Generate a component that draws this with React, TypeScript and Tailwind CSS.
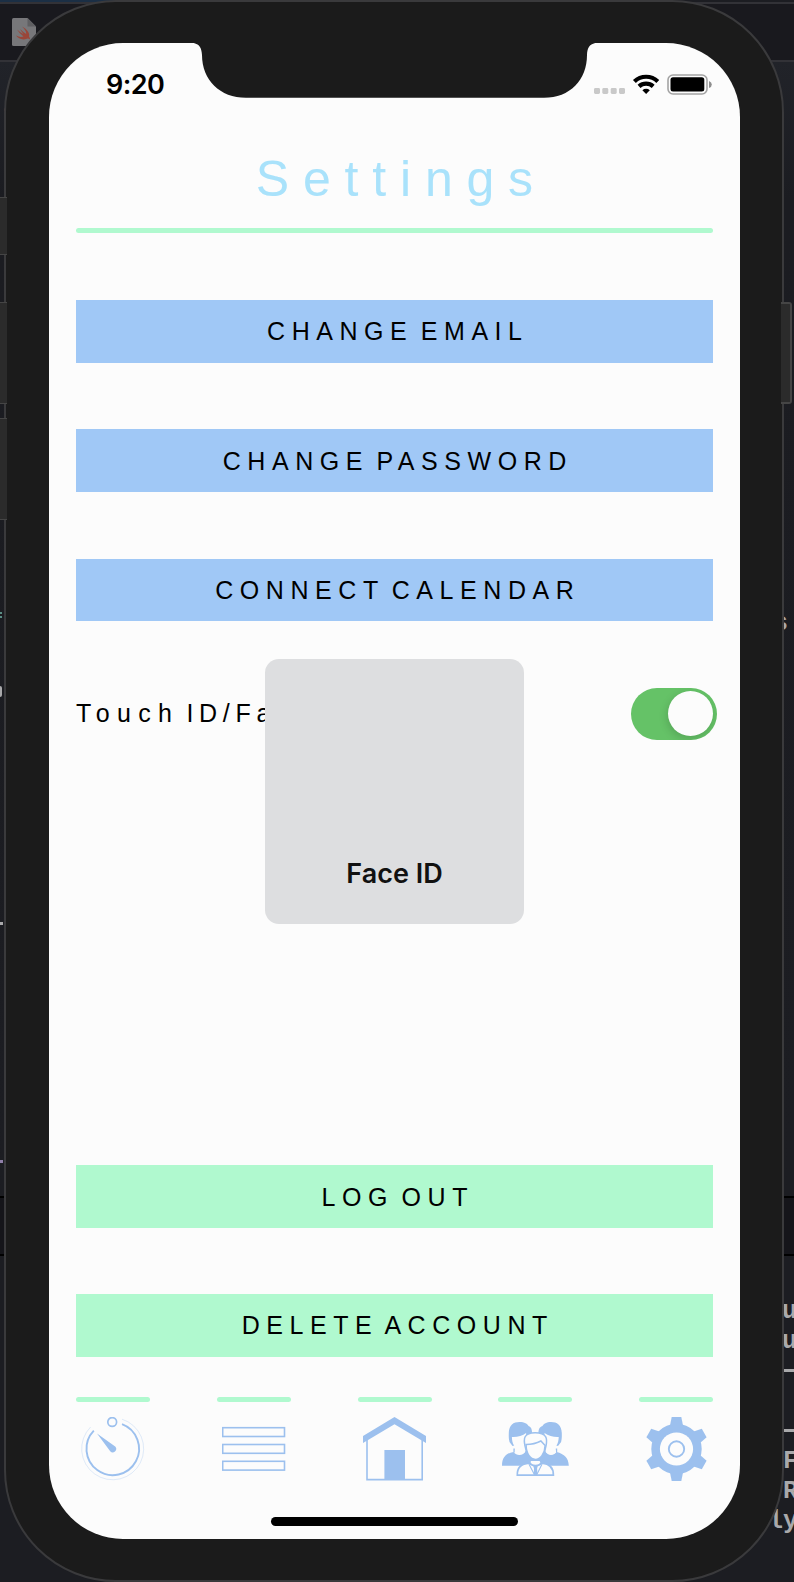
import React from "react";

const BLUE = "#9cc0ee";

function ActionButton({ label, tone }: { label: string; tone: "blue" | "green" }) {
  return (
    <button
      className={`flex h-[62.5px] w-full items-center justify-center pt-[0.6px] pl-[6.6px] text-[25px] leading-none tracking-[6.55px] [word-spacing:-6px] whitespace-pre text-black ${
        tone === "blue" ? "bg-[#a0c8f6]" : "bg-[#b0f9cf]"
      }`}
    >
      {label}
    </button>
  );
}

function TimerIcon() {
  return (
    <svg width="64" height="64" viewBox="0 0 64 64" fill="none" stroke={BLUE}>
      <circle cx="31.2" cy="5" r="4.4" strokeWidth="1.7" />
      <path d="M41 7.2A26.3 26.3 0 1 1 12.8 13.6" strokeWidth="1.9" />
      <path d="M41 2.2A31 31 0 1 1 9.6 10" strokeWidth="1" opacity="0.3" />
      <path d="M16 16.5L34.2 29.6A3.3 3.3 0 0 1 29.2 34.2Z" fill={BLUE} stroke="none" />
    </svg>
  );
}

function ListIcon() {
  return (
    <svg width="64" height="64" viewBox="0 0 64 64" fill="none" stroke={BLUE} strokeWidth="1.6">
      <rect x="0.7" y="10.7" width="61.8" height="8.8" />
      <rect x="0.7" y="27.5" width="61.8" height="8.8" />
      <rect x="0.7" y="44.3" width="61.8" height="8.8" />
    </svg>
  );
}

function HomeIcon() {
  return (
    <svg width="64" height="64" viewBox="0 0 64 64" fill={BLUE}>
      <path d="M31.5 0L63 19V26L31.5 7.2L0 26V19Z" />
      <path d="M4 22V62.6H59.2V22" fill="none" stroke={BLUE} strokeWidth="1.6" />
      <rect x="21.4" y="33" width="20.6" height="30" />
    </svg>
  );
}

function PeopleIcon() {
  return (
    <svg width="68" height="64" viewBox="-0.5 0 68 64" fill={BLUE}>
      <path d="M8 25C7 21 7.3 18 7.3 16C7.5 8 12 5 18 5C23 5 26 7 27 9C30 10 31 13 30.5 20L27 25L11 29Z" />
      <path d="M10.4 20C15 20.4 21 19 24.6 16V20C24.6 27 22.5 32.2 18.3 32.2C13 32.2 10.4 26 10.4 20Z" fill="#fcfcfc" />
      <path d="M59.6 25C60.6 21 60.3 18 60.3 16C60 8 55.5 5 49.6 5C45 5 42 7 41 9C37.5 10 36.5 13 37 20L41 25L56.5 29Z" />
      <path d="M57.2 20C53 20.4 47 19 43 16V20C43 27 45 32.2 49.3 32.2C54.5 32.2 57.2 26 57.2 20Z" fill="#fcfcfc" />
      <path d="M.5 48.7C.5 40 5 36 12 35C15 39 22 39 24 34L34 41L44 34C46 39 52 39 55 35C63 37 67 41 67.3 48.7Z" />
      <path d="M12.6 35.5V31.5M55 35.5V31.5" stroke={BLUE} strokeWidth="1.4" />
      <path d="M13.4 33C15.5 34.8 21 34.8 23.6 32.6V35C21 37.8 15.5 37.8 13.4 35.4Z" fill="#fcfcfc" />
      <path d="M44.2 32.6C47 34.8 52 34.8 54.4 33V35.4C52 37.8 47 37.8 44.2 35Z" fill="#fcfcfc" />
      <path d="M23.5 29C22 22 22 15.7 33.7 15.7C45.5 15.7 46 22 44.5 29C43.5 37 39 42.6 34 42.6C29 42.6 24.5 37 23.5 29Z" fill="#fcfcfc" stroke={BLUE} strokeWidth="1.5" />
      <path d="M24.6 27.5C30 27.5 35 26.3 39.4 24L43.6 28.5C43.4 37 38.5 42.4 34 42.4C29 42.4 24.6 37 24.6 27.5Z" fill="#fcfcfc" stroke={BLUE} strokeWidth="1.5" />
      <path d="M15.8 58.2C15.5 51 19 47 27.5 46.2L29 43.2H38.6L40.5 46.2C49 47 52 51 51.9 58.2Z" fill="#fcfcfc" stroke={BLUE} strokeWidth="1.7" />
      <path d="M28 45.4C29.5 49.6 38.5 49.6 40 45.4" fill="none" stroke={BLUE} strokeWidth="1.8" />
      <path d="M31.6 48.6H36.4L35.6 51.5L36 58H32.2L32.5 51.5Z" />
      <path d="M27.4 47L32.6 57M40.6 47L35.6 57" stroke={BLUE} strokeWidth="1.1" />
    </svg>
  );
}

function GearIcon() {
  const teeth = [0, 60, 120, 180, 240, 300];
  return (
    <svg width="64" height="64" viewBox="0 0 64 64" fill={BLUE}>
      <circle cx="32.5" cy="32" r="25.2" />
      {teeth.map((a) => (
        <path key={a} d="M27.7 0H37.3L39.3 10H25.7Z" transform={`rotate(${a} 32.5 32)`} />
      ))}
      <circle cx="32.5" cy="32" r="16.6" fill="#fcfcfc" />
      <circle cx="32.5" cy="32" r="7.7" fill="none" stroke={BLUE} strokeWidth="1.9" />
    </svg>
  );
}

function StatusIcons() {
  return (
    <svg width="120" height="24" viewBox="593 72 120 24">
      {[594, 602.3, 610.7, 619].map((x) => (
        <rect key={x} x={x} y="88" width="6" height="6" rx="1.4" fill="#c9c9c9" />
      ))}
      <g fill="none" stroke="#000" strokeWidth="4.2">
        <path d="M634.4 81.4A17 17 0 0 1 657.8 81.4" />
        <path d="M639 86.4A10.5 10.5 0 0 1 653.2 86.4" />
      </g>
      <path d="M642.4 90.2A5.4 5.4 0 0 1 649.8 90.2L646.1 94Z" />
      <rect x="668" y="75" width="39" height="19" rx="5" fill="none" stroke="#a3a3a3" strokeWidth="1.6" />
      <rect x="670.5" y="77.2" width="33.8" height="14.4" rx="2.5" />
      <path d="M709 81Q711.8 82 711.8 84.5Q711.8 87 709 88Z" fill="#8e8e8e" />
    </svg>
  );
}

function Notch() {
  return (
    <svg className="absolute top-0 left-[137px]" width="418" height="56" viewBox="186 43 418 56" fill="#1b1b1b">
      <path d="M186 42.5H190C199 43 201.5 47 202 55C202 80 220 97.8 246 97.8H544C570 97.8 587 80 587 55C587.3 47 590 43 599 42.5Z" />
    </svg>
  );
}

function SwiftFile() {
  return (
    <svg width="24" height="28" viewBox="0 0 24 28">
      <path d="M1.5 0H15.5L24 8.5V28H1.5Q0 28 0 26.5V1.5Q0 0 1.5 0Z" fill="#77777a" />
      <path d="M15.5 0L24 8.5H15.5Z" fill="#5f5f62" />
      <path
        d="M10 8.5C16 12 18 15.5 17 18.5Q18.6 20.5 17.7 21.5Q16.5 20 14.8 20.7C10.5 22.5 6 20.5 4 17.5Q8 19.8 11.5 18.5Q7 15 5 11.5Q8.5 14.7 11.6 16.2Q9 13 8 11Q11 14 14.2 16Q14.5 12.5 10 8.5Z"
        fill="#9a4639"
      />
    </svg>
  );
}

/* Code editor window that sits behind the simulator. */
function Desktop() {
  return (
    <div className="absolute inset-0 flex flex-col bg-[#1c1d22] font-['Liberation_Mono',monospace] text-[25px] leading-[30px] font-bold text-[#a9a9ab]">
      <div className="h-[2px] w-[440px] shrink-0 bg-[#1b2f45]" />
      <div className="h-[60px] shrink-0 border-y-2 border-[#323237] bg-[#19191e] pt-[14px] pl-[12px]">
        <SwiftFile />
      </div>
      <div className="flex h-[1134px] shrink-0 justify-between bg-[linear-gradient(180deg,#212329,#1b1c21_12%,#1c1d22)]">
        <div className="flex flex-col items-start pt-[46px]">
          <div className="ml-[4px] h-[9px] w-[3px] rounded-full bg-[#8a4a42]" />
          <div className="mt-[431px] ml-[4px] h-[6px] w-[2px] border-y-2 border-[#808080]" />
          <div className="mt-[58px] h-[6px] w-[2px] border-y-2 border-[#5c8f86]" />
          <div className="mt-[68px] h-[11px] w-[2px] rounded-r-full bg-[#a9a9ab]" />
          <div className="mt-[225px] h-[3px] w-[3px] bg-[#a9a9ab]" />
          <div className="mt-[235px] h-[3px] w-[3px] bg-[#8f7fa8]" />
        </div>
        <div className="pt-[547px] pr-[6px]">s</div>
      </div>
      <div className="h-[60px] shrink-0 border-y-2 border-black bg-[#15151a]" />
      <div className="flex grow flex-col pt-[41px] pl-[768px]">
        <div className="pl-[14px]">u</div>
        <div className="pl-[14px]">u</div>
        <div className="flex h-[90px] flex-col justify-between pt-[12px] pb-[15px] pl-[16px]">
          <div className="h-[3px] w-[10px] bg-[#a9a9ab]" />
          <div className="h-[3px] w-[10px] bg-[#a9a9ab]" />
        </div>
        <div className="pl-[15px]">F</div>
        <div>FR</div>
        <div>ly</div>
      </div>
    </div>
  );
}

const tabs = [TimerIcon, ListIcon, HomeIcon, PeopleIcon, GearIcon];

export default function App() {
  return (
    <div className="relative flex h-[1582px] w-[794px] overflow-hidden font-['Liberation_Sans',Arial,sans-serif]">
      <Desktop />

      <div className="relative ml-[4px] flex h-[1582px] w-[780px] shrink-0 rounded-[112px] border-2 border-[#3a3a3c] bg-[#1b1b1b]">
        <div className="-ml-[7px] flex w-[50px] shrink-0 flex-col pt-[195px]">
          <div className="h-[58px] w-[8px] border-y border-[#454545] bg-[#2b2b2b]" />
          <div className="mt-[47px] h-[102px] w-[8px] border-y border-[#454545] bg-[#2b2b2b]" />
          <div className="mt-[14px] h-[102px] w-[8px] border-y border-[#454545] bg-[#2b2b2b]" />
        </div>

        <main className="relative mt-[41px] flex h-[1496px] w-[691px] shrink-0 flex-col overflow-hidden rounded-[74px] bg-[#fcfcfc] px-[27px] text-black">
          <Notch />

          <header className="flex h-[82px] shrink-0 items-center justify-between pl-[30px]">
            <div className="font-['Inter',sans-serif] text-[27px] leading-none font-semibold tracking-[-0.6px]">9:20</div>
            <StatusIcons />
          </header>

          <h1 className="flex h-[103px] shrink-0 items-center justify-center pt-[4px] pl-[13.8px] text-[50px] leading-none tracking-[13.8px] text-[#a9e2fb]">
            Settings
          </h1>
          <div className="h-[5px] shrink-0 rounded-full bg-[#b0f9cf]" />

          <section className="mt-[67.2px] flex shrink-0 flex-col gap-[66.8px]">
            <ActionButton label="CHANGE EMAIL" tone="blue" />
            <ActionButton label="CHANGE PASSWORD" tone="blue" />
            <ActionButton label="CONNECT CALENDAR" tone="blue" />
          </section>

          <div className="mt-[66.7px] -mr-[4px] flex h-[52px] shrink-0 items-center justify-between">
            <p className="text-[25px] leading-none [word-spacing:-7px] whitespace-pre">
              <span className="tracking-[7.3px]">Touch </span>
              <span className="tracking-[5.7px]">ID/Face ID</span>
            </p>
            <div className="flex h-[52px] w-[86px] items-center justify-end overflow-hidden rounded-full bg-[#65c267] pr-[4px]">
              <div className="size-[45px] rounded-full bg-[#fcfcfc] shadow-[-1px_3px_8px_rgba(0,0,0,0.15)]" />
            </div>
          </div>

          <section className="mt-[425.5px] flex shrink-0 flex-col gap-[66.4px]">
            <ActionButton label="LOG OUT" tone="green" />
            <ActionButton label="DELETE ACCOUNT" tone="green" />
          </section>

          <nav className="mt-[40.2px] flex shrink-0 justify-between">
            {tabs.map((Icon, i) => (
              <div key={i} className="flex w-[74px] flex-col items-center gap-[15px]">
                <div className="h-[5px] w-full rounded-full bg-[#b0f9cf]" />
                <Icon />
              </div>
            ))}
          </nav>

          <div className="mt-[36px] h-[8.5px] w-[247px] shrink-0 self-center rounded-full bg-black" />

          <div className="absolute top-[616px] left-[216px] flex h-[265px] w-[259px] items-end justify-center rounded-[14px] bg-[#dddee0] pb-[37px] font-['Inter',sans-serif] text-[27px] leading-none font-semibold text-[#111]">
            Face ID
          </div>
        </main>

        <div className="-mr-[10px] flex grow flex-col items-end pt-[300px]">
          <div className="h-[102px] w-[11px] rounded-r-[3px] border-2 border-l-0 border-[#454545] bg-[#2b2b2b]" />
        </div>
      </div>
    </div>
  );
}
